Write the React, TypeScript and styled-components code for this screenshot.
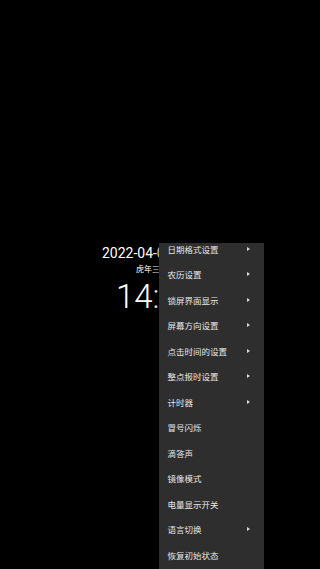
import React from 'react';
import styled, { createGlobalStyle } from 'styled-components';

const GlobalStyle = createGlobalStyle`
  html, body {
    margin: 0;
    padding: 0;
    background: #000;
  }
  body {
    font-family: Roboto, "Noto Sans CJK SC", sans-serif;
  }
`;

interface MenuItem {
  label: string;
  sub?: boolean;
}

const items: MenuItem[] = [
  { label: '日期格式设置', sub: true },
  { label: '农历设置', sub: true },
  { label: '锁屏界面显示', sub: true },
  { label: '屏幕方向设置', sub: true },
  { label: '点击时间的设置', sub: true },
  { label: '整点报时设置', sub: true },
  { label: '计时器', sub: true },
  { label: '冒号闪烁' },
  { label: '滴答声' },
  { label: '镜像模式' },
  { label: '电量显示开关' },
  { label: '语言切换', sub: true },
  { label: '恢复初始状态' },
];

const App = () => {
  return (
    <Screen>
      <GlobalStyle />
      <Clock>
        <DateLine>2022-04-06 星期三</DateLine>
        <Lunar>虎年三月初六</Lunar>
        <Time>14:25</Time>
      </Clock>

      {/* popup menu, list scrolled a few px */}
      <Menu>
        <MenuList>
          {items.map(item => (
            <Row key={item.label}>
              <span>{item.label}</span>
              {item.sub && <Arrow />}
            </Row>
          ))}
        </MenuList>
      </Menu>
    </Screen>
  );
};

export default App;

const Screen = styled.div`
  position: relative;
  width: 320px;
  height: 569px;
  overflow: hidden;
  background: #000;
`;

const Clock = styled.div`
  display: flex;
  flex-direction: column;
  align-items: center;
  padding-top: 243px;
  color: #fff;
`;

const DateLine = styled.div`
  font-family: Roboto, "Noto Sans CJK SC", sans-serif;
  font-size: 14px;
  line-height: 20px;
`;

const Lunar = styled.div`
  font-family: "Noto Sans CJK SC", sans-serif;
  font-size: 8px;
  line-height: 11px;
`;

const Time = styled.div`
  font-family: Roboto, sans-serif;
  font-weight: 300;
  font-size: 33px;
  line-height: 46px;
  margin-right: 8px;
`;

const Menu = styled.div`
  position: absolute;
  left: 158.5px;
  top: 243px;
  width: 105px;
  bottom: 0;
  overflow: hidden;
  background: #2e2e2e;
  box-shadow: 0 2px 6px rgba(0, 0, 0, 0.6);
`;

const MenuList = styled.div`
  display: flex;
  flex-direction: column;
  margin-top: -7px;
`;

const Row = styled.div`
  display: flex;
  align-items: center;
  justify-content: space-between;
  height: 25.5px;
  padding: 0 14px 0 9px;
  font-family: "Noto Sans CJK SC", sans-serif;
  font-size: 8.5px;
  color: #e6e6e6;
`;

const Arrow = styled.i`
  width: 0;
  height: 0;
  border-top: 2.5px solid transparent;
  border-bottom: 2.5px solid transparent;
  border-left: 3px solid #d8d8d8;
`;
